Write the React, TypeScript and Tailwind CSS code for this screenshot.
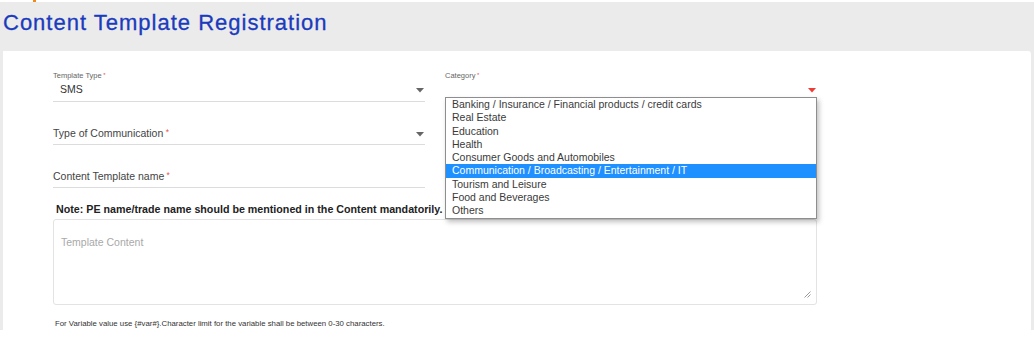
import React from "react";

const CATEGORIES = [
  "Banking / Insurance / Financial products / credit cards",
  "Real Estate",
  "Education",
  "Health",
  "Consumer Goods and Automobiles",
  "Communication / Broadcasting / Entertainment / IT",
  "Tourism and Leisure",
  "Food and Beverages",
  "Others",
];

function Caret({ red }: { red?: boolean }) {
  return (
    <svg width="8" height="5" viewBox="0 0 8 5" className="shrink-0">
      <path d="M0 0 L8 0 L4 4.5 Z" fill={red ? "#ef3b36" : "#666666"} />
    </svg>
  );
}

function Req() {
  return <span className="text-[#e8504a] text-[0.8em] align-top"> *</span>;
}

export default function App() {
  return (
    <div className="w-[1034px] h-[344px] overflow-hidden bg-white text-[#333] font-['Liberation_Sans',Arial,sans-serif]">
      <div className="h-[2px] pl-[33px]">
        <div className="w-[3px] h-[2px] bg-[#f08a1c]" />
      </div>
      <div className="h-[328px] bg-[#ebebeb] px-[3px]">
        <h1 className="h-[49px] pt-[7px] text-[22px] leading-[28px] tracking-[1px] text-[#1b3bbd] [-webkit-text-stroke:0.3px_#1b3bbd]">
          Content Template Registration
        </h1>
        <div className="relative h-[279px] bg-white rounded-tr-[3px] pl-[50px] pt-[19px]">
          <div className="w-[764px]">
            <div className="grid grid-cols-2 gap-x-[20px]">
              <div>
                <div className="border-b border-[#dcdcdc]">
                  <div className="h-[11px] text-[7.5px] leading-[11px] text-[#666]">
                    Template Type<Req />
                  </div>
                  <div className="h-[20px] flex items-center justify-between pl-[7px] pr-[1px] pb-[2px]">
                    <span className="text-[10.5px]">SMS</span>
                    <Caret />
                  </div>
                </div>
                <div className="mt-[22px] h-[21px] border-b border-[#dcdcdc] flex items-center justify-between pr-[1px]">
                  <span className="text-[10.5px] text-[#444]">
                    Type of Communication<Req />
                  </span>
                  <Caret />
                </div>
                <div className="mt-[22px] h-[21px] border-b border-[#dcdcdc] flex items-center">
                  <span className="text-[10.5px] text-[#444]">
                    Content Template name<Req />
                  </span>
                </div>
              </div>
              <div>
                <div className="h-[11px] text-[7.5px] leading-[11px] text-[#666]">
                  Category<Req />
                </div>
                <div className="h-[20px] flex items-center justify-end pr-[1px] pb-[2px]">
                  <Caret red />
                </div>
              </div>
            </div>
            <p className="mt-[14px] h-[14px] pl-[3px] text-[10.7px] leading-[14px] font-bold text-[#222]">
              Note: PE name/trade name should be mentioned in the Content mandatorily.
            </p>
            <div className="relative mt-[3px] h-[86px] rounded-[3px] border border-[#e3e3e3] px-[7px] pt-[9px]">
              <span className="text-[10.5px] text-[#a9a9a9]">Template Content</span>
              <svg width="7" height="7" viewBox="0 0 7 7" className="absolute right-[5px] bottom-[6px]">
                <path d="M6.5 0.5 L0.5 6.5 M6.5 3.5 L3.5 6.5" stroke="#9a9a9a" strokeWidth="1" />
              </svg>
            </div>
            <p className="mt-[13px] pl-[2px] text-[7.8px] leading-[12px] text-[#333]">
              For Variable value use {"{#var#}"}.Character limit for the variable shall be between 0-30 characters.
            </p>
          </div>

          <ul className="absolute left-[442px] top-[46px] w-[372px] border border-[#8e8e8e] bg-white shadow-[2px_3px_5px_rgba(0,0,0,0.25)]">
            {CATEGORIES.map((c, i) => (
              <li
                key={c}
                className={
                  "h-[13.3px] pl-[6px] text-[10.5px] leading-[13.3px] " +
                  (i === 5 ? "bg-[#1e90ff] text-white" : "text-[#3a3a3a]")
                }
              >
                {c}
              </li>
            ))}
          </ul>
        </div>
      </div>
    </div>
  );
}
